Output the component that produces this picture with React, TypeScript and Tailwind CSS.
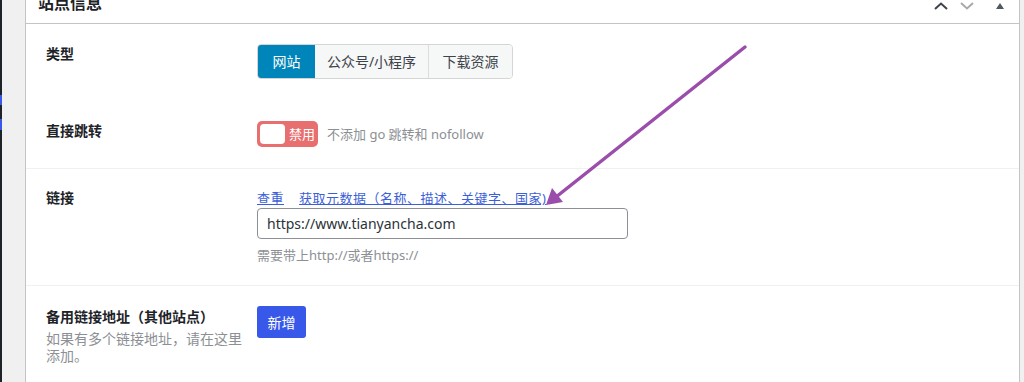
import React from "react";

const font = { fontFamily: '"Noto Sans", "Noto Sans CJK SC", sans-serif' };

export default function App() {
  return (
    <div
      className="relative flex h-[382px] w-[1024px] overflow-hidden bg-[#f0f0f1] text-[#1d2327]"
      style={font}
    >
      {/* admin sidebar edge */}
      <div className="flex w-[2px] flex-col bg-[#1d2327]">
        <div className="h-[95px]" />
        <div className="h-[10px] bg-[#3858e9]" />
        <div className="h-[14px]" />
        <div className="h-[11px] bg-[#3858e9]" />
      </div>
      <div className="w-[23px]" />

      {/* panel */}
      <div className="flex w-[995px] flex-col border-x border-[#c3c4c7] bg-white">
        {/* header */}
        <div className="flex h-[24px] items-start justify-between border-b border-[#c3c4c7]">
          <div className="-mt-[7px] pl-[12px] text-[16px] font-bold leading-[20px]">站点信息</div>
          <div className="flex items-center gap-[10px] pr-[14px] pt-[1px] text-[#50575e]">
            <svg width="16" height="10" viewBox="0 0 16 10">
              <path d="M2 8 L8 2.5 L14 8" fill="none" stroke="#3c434a" strokeWidth="2" />
            </svg>
            <svg width="16" height="10" viewBox="0 0 16 10">
              <path d="M2 2 L8 7.5 L14 2" fill="none" stroke="#a7aaad" strokeWidth="2" />
            </svg>
            <div className="w-[0px]" />
            <svg width="10" height="8" viewBox="0 0 10 8">
              <path d="M1 7 L5 1 L9 7 Z" fill="#50575e" />
            </svg>
          </div>
        </div>

        {/* section 1 */}
        <div className="flex flex-col border-b border-[#f0f0f1] pb-[20px] pl-[20px] pt-[20px]">
          <div className="flex h-[35px]">
            <div className="w-[211px] text-[14px] font-semibold leading-[20px]">类型</div>
            <div className="flex h-[35px] overflow-hidden rounded-[4px] border border-[#d5d5d5] text-[14px]">
              <div className="flex w-[57px] items-center justify-center bg-[#0085ba] text-white">网站</div>
              <div className="flex w-[114px] items-center justify-center border-r border-[#dcdcdc] bg-[#f6f7f7] text-[#3c434a]">公众号/小程序</div>
              <div className="flex w-[83px] items-center justify-center bg-[#f6f7f7] text-[#3c434a]">下载资源</div>
            </div>
          </div>
          <div className="mt-[42px] flex h-[27px]">
            <div className="w-[211px] text-[14px] font-semibold leading-[20px]">直接跳转</div>
            <div className="flex h-[26px] w-[61px] items-center rounded-[5px] bg-[#e86f6f] px-[3px]">
              <div className="h-[20px] w-[25px] rounded-[4px] bg-white" />
              <div className="ml-[4px] text-[13px] leading-none text-white">禁用</div>
            </div>
            <div className="ml-[9px] pt-[3px] text-[13px] leading-[20px] text-[#8c8f94]">不添加 go 跳转和 nofollow</div>
          </div>
        </div>

        {/* section 2 */}
        <div className="flex h-[117px] border-b border-[#f0f0f1] pl-[20px] pt-[19px]">
          <div className="w-[211px] text-[14px] font-semibold leading-[20px]">链接</div>
          <div className="flex flex-col">
            <div className="flex gap-[15px] pt-[1px] text-[13px] leading-[18px] tracking-[0.5px] text-[#3c5fd8]">
              <span className="underline">查重</span>
              <span className="underline">获取元数据（名称、描述、关键字、国家)</span>
            </div>
            <div className="mt-[1px] flex h-[31px] w-[371px] items-center rounded-[4px] border border-[#8c8f94] px-[9px] text-[14px] text-[#2c3338]">
              https://www.tianyancha.com
            </div>
            <div className="mt-[7px] text-[13px] leading-[18px] text-[#8c8f94]">需要带上http://或者https://</div>
          </div>
        </div>

        {/* section 3 */}
        <div className="flex pl-[20px] pt-[20px]">
          <div className="w-[211px]">
            <div className="pt-[1px] text-[14px] font-semibold leading-[20px]">备用链接地址（其他站点）</div>
            <div className="mt-[3px] w-[205px] text-[14px] leading-[17px] text-[#8c8f94]">如果有多个链接地址，请在这里添加。</div>
          </div>
          <div className="flex h-[32px] w-[49px] items-center justify-center rounded-[3px] bg-[#3858e9] text-[14px] text-white">新增</div>
        </div>
      </div>

      {/* annotation arrow */}
      <svg className="pointer-events-none absolute left-0 top-0" width="1024" height="382">
        <line x1="745" y1="47" x2="556" y2="197" stroke="#9b4dab" strokeWidth="3.5" strokeLinecap="round" />
        <path d="M546 205 L552 188 L563 202 Z" fill="#9b4dab" />
      </svg>
    </div>
  );
}
